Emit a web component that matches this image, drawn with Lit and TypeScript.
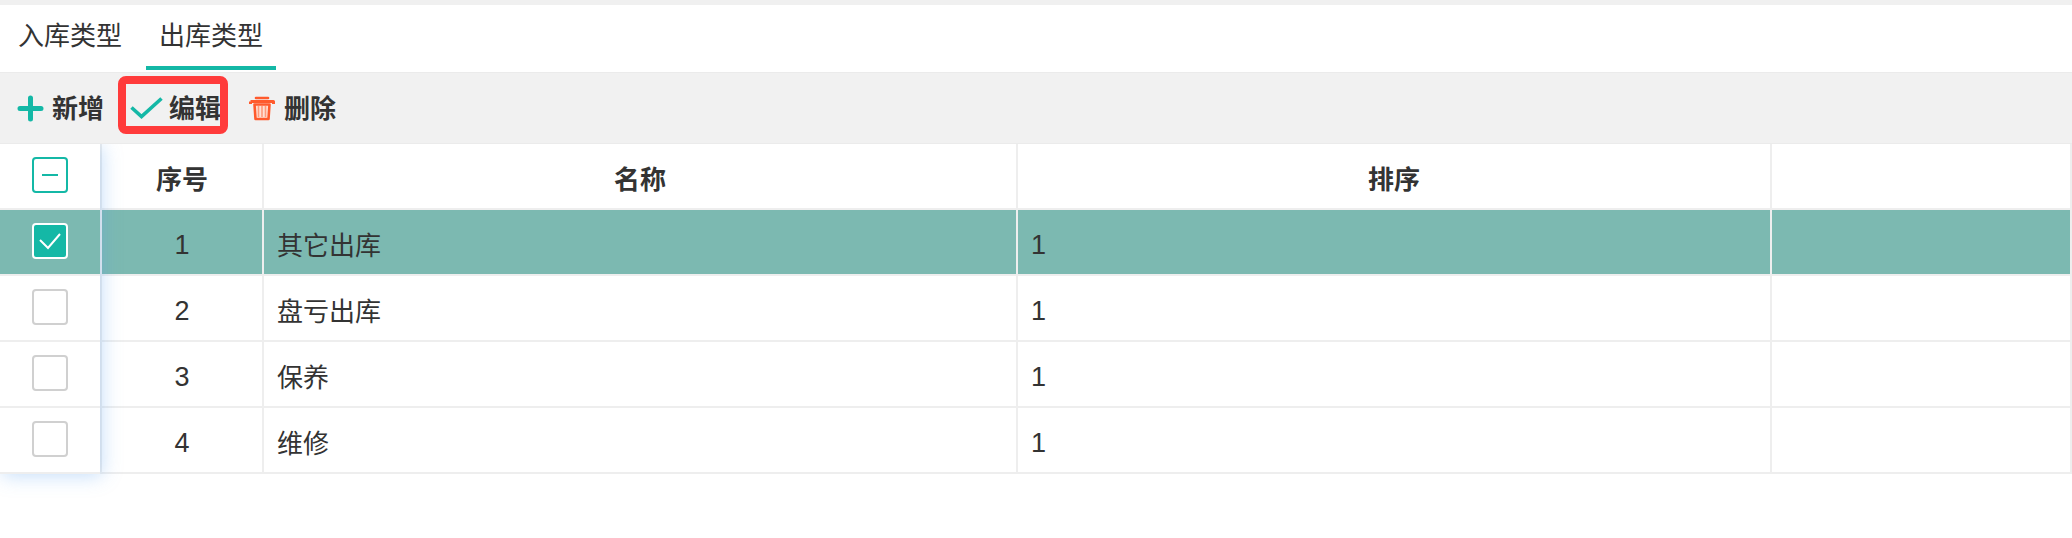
import { LitElement, html, css, svg } from 'lit';
import { customElement, state } from 'lit/decorators.js';

interface Row {
  id: number;
  name: string;
  sort: number;
  checked?: boolean;
}

const ROWS: Row[] = [
  { id: 1, name: '其它出库', sort: 1, checked: true },
  { id: 2, name: '盘亏出库', sort: 1 },
  { id: 3, name: '保养', sort: 1 },
  { id: 4, name: '维修', sort: 1 },
];

const plusIcon = svg`<path d="M13.5 3v21M3 13.5h21" fill="none" stroke="#14b8a6" stroke-width="5" stroke-linecap="round"/>`;
const checkIcon = svg`<path d="M1.5 11.5l10 9L31.5 2.5" fill="none" stroke="#14b8a6" stroke-width="3.6"/>`;
const trashIcon = svg`
  <path d="M7 2h12" stroke="#ff5a2c" stroke-width="2.6" stroke-linecap="round"/>
  <path d="M1.5 5.5h23v2.5" fill="none" stroke="#ff5a2c" stroke-width="3" stroke-linejoin="round"/>
  <path d="M1.5 5.5V8" stroke="#ff5a2c" stroke-width="3"/>
  <path d="M5.5 8.5h15l-1 14.5h-13z" fill="#ffe0d4" stroke="#ff5a2c" stroke-width="2.6" stroke-linejoin="round"/>
  <path d="M9.5 10v11M13 10v11M16.5 10v11" stroke="#ff9a7a" stroke-width="1.6"/>
`;

@customElement('app-root')
export class AppRoot extends LitElement {
  @state()
  private activeTab = 1;

  static styles = css`
    :host {
      display: block;
      width: 2072px;
      height: 538px;
      background: #fff;
      overflow: hidden;
      font-family: 'Liberation Sans', 'Noto Sans CJK SC', sans-serif;
      color: #333;
      font-size: 26px;
    }
    .top-strip {
      height: 5px;
      background: #f0f0f0;
    }
    .tabs {
      display: flex;
      height: 67px;
      background: #fff;
      padding-left: 5px;
      box-sizing: border-box;
    }
    .tab {
      width: 130px;
      text-align: center;
      line-height: 62px;
      height: 65px;
      box-sizing: border-box;
      margin-right: 11px;
    }
    .tab.active {
      border-bottom: 4px solid #14b8a6;
    }
    .toolbar {
      display: flex;
      align-items: center;
      height: 72px;
      background: #f1f1f1;
      border-top: 1px solid #ebebeb;
      border-bottom: 1px solid #ebebeb;
      position: relative;
      z-index: 3;
      font-weight: 700;
      padding-left: 17px;
      box-sizing: border-box;
    }
    .tool {
      display: flex;
      align-items: center;
    }
    .tool svg {
      display: block;
    }
    .tool span {
      padding-bottom: 3px;
    }
    .tool.add {
      gap: 8px;
      width: 113px;
    }
    .tool.edit {
      gap: 3px;
      width: 119px;
    }
    .tool.del {
      gap: 9px;
    }
    .highlight {
      position: absolute;
      left: 118px;
      top: 3px;
      width: 110px;
      height: 58px;
      box-sizing: border-box;
      border: 8px solid #ff3b3b;
      border-radius: 8px;
    }
    .grid {
      display: flex;
      position: relative;
    }
    .fixed {
      width: 100px;
      flex: none;
      background: #fff;
      position: relative;
      z-index: 2;
      box-shadow: 2px 2px 18px rgba(90, 160, 240, 0.35);
    }
    .check-cell {
      height: 66px;
      box-sizing: border-box;
      padding-bottom: 2px;
      border-bottom: 2px solid #eee;
      display: flex;
      align-items: center;
      justify-content: center;
    }
    .check-cell.selected {
      background: #7cb9b1;
    }
    .box {
      width: 36px;
      height: 36px;
      box-sizing: border-box;
      border: 2px solid #d0d0d0;
      border-radius: 4px;
      background: #fff;
      display: flex;
      align-items: center;
      justify-content: center;
    }
    .box.partial {
      border-color: #14b8a6;
    }
    .box.partial::before {
      content: '';
      width: 16px;
      height: 2px;
      background: #14b8a6;
    }
    .box.on {
      border-color: #fff;
      background: #14b8a6;
    }
    table {
      flex: 1;
      border-collapse: separate;
      border-spacing: 0;
      table-layout: fixed;
      border-left: 2px solid #eee;
      min-width: 0;
    }
    th,
    td {
      height: 66px;
      padding: 2px 0 0;
      box-sizing: border-box;
      border-bottom: 2px solid #eee;
      border-right: 2px solid #eee;
      font-weight: 400;
    }
    th {
      font-weight: 700;
      text-align: center;
    }
    td {
      padding-left: 13px;
    }
    td.num {
      text-align: center;
      padding-left: 0;
      padding-top: 6px;
      font-size: 27px;
    }
    td.sort {
      padding-top: 6px;
      font-size: 27px;
    }
    tr.selected td {
      background: #7cb9b1;
    }
  `;

  render() {
    return html`
      <div class="top-strip"></div>
      <div class="tabs">
        ${['入库类型', '出库类型'].map(
          (t, i) => html`<div class="tab ${i === this.activeTab ? 'active' : ''}">${t}</div>`
        )}
      </div>
      <div class="toolbar">
        <div class="tool add">
          <svg width="27" height="27" viewBox="0 0 27 27">${plusIcon}</svg><span>新增</span>
        </div>
        <div class="tool edit">
          <svg width="36" height="24" viewBox="0 0 36 24">${checkIcon}</svg><span>编辑</span>
        </div>
        <div class="tool del">
          <svg width="26" height="25" viewBox="0 0 26 25">${trashIcon}</svg><span>删除</span>
        </div>
        <div class="highlight"></div>
      </div>
      <div class="grid">
        <div class="fixed">
          <div class="check-cell"><span class="box partial"></span></div>
          ${ROWS.map(
            r => html`
              <div class="check-cell ${r.checked ? 'selected' : ''}">
                <span class="box ${r.checked ? 'on' : ''}">
                  ${r.checked
                    ? html`<svg width="24" height="18" viewBox="0 0 24 18"><path d="M2 8l8 8L22 2" fill="none" stroke="#fff" stroke-width="2"/></svg>`
                    : null}
                </span>
              </div>
            `
          )}
        </div>
        <table>
          <colgroup>
            <col style="width:162px" />
            <col style="width:754px" />
            <col style="width:754px" />
            <col />
          </colgroup>
          <thead>
            <tr><th>序号</th><th>名称</th><th>排序</th><th></th></tr>
          </thead>
          <tbody>
            ${ROWS.map(
              r => html`
                <tr class=${r.checked ? 'selected' : ''}>
                  <td class="num">${r.id}</td>
                  <td>${r.name}</td>
                  <td class="sort">${r.sort}</td>
                  <td></td>
                </tr>
              `
            )}
          </tbody>
        </table>
      </div>
    `;
  }
}
